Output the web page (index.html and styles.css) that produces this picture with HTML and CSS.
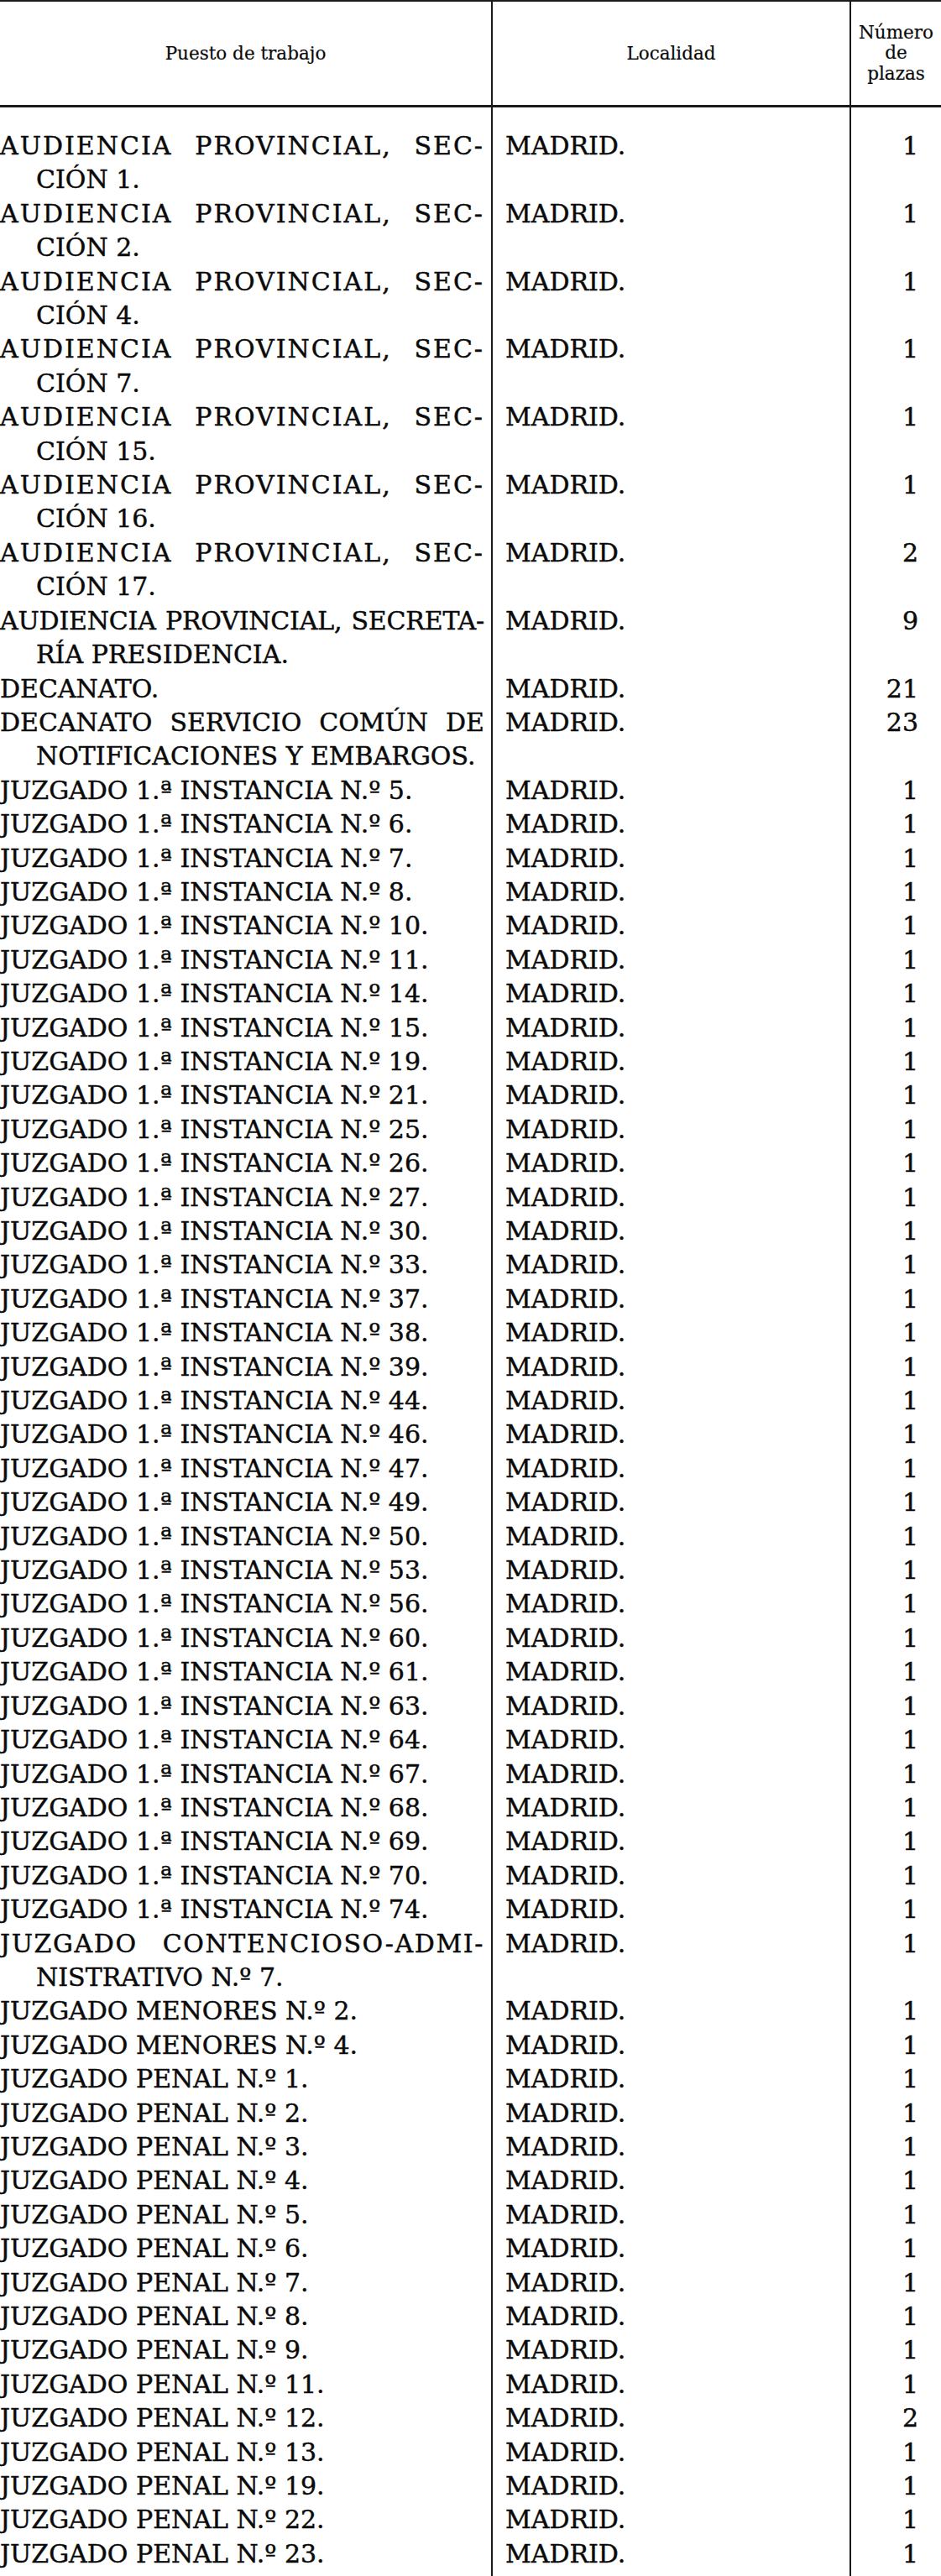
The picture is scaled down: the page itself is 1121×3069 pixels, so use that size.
FILE: index.html
```html
<!DOCTYPE html>
<html lang="es">
<head>
<meta charset="utf-8">
<title>Puestos de trabajo</title>
<link rel="stylesheet" href="styles.css">
</head>
<body>
<table class="plazas">
  <colgroup>
    <col class="c-puesto">
    <col class="c-loc">
    <col class="c-num">
  </colgroup>
  <thead>
    <tr>
      <th class="h-puesto">Puesto de trabajo</th>
      <th class="h-loc">Localidad</th>
      <th class="h-num">Número<br>de<br>plazas</th>
    </tr>
  </thead>
  <tbody>
    <tr><td class="puesto"><span class="l1 sp">AUDIENCIA PROVINCIAL, SEC-</span><span class="l2">CIÓN 1.</span></td><td class="loc">MADRID.</td><td class="num">1</td></tr>
    <tr><td class="puesto"><span class="l1 sp">AUDIENCIA PROVINCIAL, SEC-</span><span class="l2">CIÓN 2.</span></td><td class="loc">MADRID.</td><td class="num">1</td></tr>
    <tr><td class="puesto"><span class="l1 sp">AUDIENCIA PROVINCIAL, SEC-</span><span class="l2">CIÓN 4.</span></td><td class="loc">MADRID.</td><td class="num">1</td></tr>
    <tr><td class="puesto"><span class="l1 sp">AUDIENCIA PROVINCIAL, SEC-</span><span class="l2">CIÓN 7.</span></td><td class="loc">MADRID.</td><td class="num">1</td></tr>
    <tr><td class="puesto"><span class="l1 sp">AUDIENCIA PROVINCIAL, SEC-</span><span class="l2">CIÓN 15.</span></td><td class="loc">MADRID.</td><td class="num">1</td></tr>
    <tr><td class="puesto"><span class="l1 sp">AUDIENCIA PROVINCIAL, SEC-</span><span class="l2">CIÓN 16.</span></td><td class="loc">MADRID.</td><td class="num">1</td></tr>
    <tr><td class="puesto"><span class="l1 sp">AUDIENCIA PROVINCIAL, SEC-</span><span class="l2">CIÓN 17.</span></td><td class="loc">MADRID.</td><td class="num">2</td></tr>
    <tr><td class="puesto"><span class="l1 tight">AUDIENCIA PROVINCIAL, SECRETA-</span><span class="l2">RÍA PRESIDENCIA.</span></td><td class="loc">MADRID.</td><td class="num">9</td></tr>
    <tr><td class="puesto">DECANATO.</td><td class="loc">MADRID.</td><td class="num">21</td></tr>
    <tr><td class="puesto"><span class="l1">DECANATO SERVICIO COMÚN DE</span><span class="l2">NOTIFICACIONES Y EMBARGOS.</span></td><td class="loc">MADRID.</td><td class="num">23</td></tr>
    <tr><td class="puesto">JUZGADO 1.ª INSTANCIA N.º 5.</td><td class="loc">MADRID.</td><td class="num">1</td></tr>
    <tr><td class="puesto">JUZGADO 1.ª INSTANCIA N.º 6.</td><td class="loc">MADRID.</td><td class="num">1</td></tr>
    <tr><td class="puesto">JUZGADO 1.ª INSTANCIA N.º 7.</td><td class="loc">MADRID.</td><td class="num">1</td></tr>
    <tr><td class="puesto">JUZGADO 1.ª INSTANCIA N.º 8.</td><td class="loc">MADRID.</td><td class="num">1</td></tr>
    <tr><td class="puesto">JUZGADO 1.ª INSTANCIA N.º 10.</td><td class="loc">MADRID.</td><td class="num">1</td></tr>
    <tr><td class="puesto">JUZGADO 1.ª INSTANCIA N.º 11.</td><td class="loc">MADRID.</td><td class="num">1</td></tr>
    <tr><td class="puesto">JUZGADO 1.ª INSTANCIA N.º 14.</td><td class="loc">MADRID.</td><td class="num">1</td></tr>
    <tr><td class="puesto">JUZGADO 1.ª INSTANCIA N.º 15.</td><td class="loc">MADRID.</td><td class="num">1</td></tr>
    <tr><td class="puesto">JUZGADO 1.ª INSTANCIA N.º 19.</td><td class="loc">MADRID.</td><td class="num">1</td></tr>
    <tr><td class="puesto">JUZGADO 1.ª INSTANCIA N.º 21.</td><td class="loc">MADRID.</td><td class="num">1</td></tr>
    <tr><td class="puesto">JUZGADO 1.ª INSTANCIA N.º 25.</td><td class="loc">MADRID.</td><td class="num">1</td></tr>
    <tr><td class="puesto">JUZGADO 1.ª INSTANCIA N.º 26.</td><td class="loc">MADRID.</td><td class="num">1</td></tr>
    <tr><td class="puesto">JUZGADO 1.ª INSTANCIA N.º 27.</td><td class="loc">MADRID.</td><td class="num">1</td></tr>
    <tr><td class="puesto">JUZGADO 1.ª INSTANCIA N.º 30.</td><td class="loc">MADRID.</td><td class="num">1</td></tr>
    <tr><td class="puesto">JUZGADO 1.ª INSTANCIA N.º 33.</td><td class="loc">MADRID.</td><td class="num">1</td></tr>
    <tr><td class="puesto">JUZGADO 1.ª INSTANCIA N.º 37.</td><td class="loc">MADRID.</td><td class="num">1</td></tr>
    <tr><td class="puesto">JUZGADO 1.ª INSTANCIA N.º 38.</td><td class="loc">MADRID.</td><td class="num">1</td></tr>
    <tr><td class="puesto">JUZGADO 1.ª INSTANCIA N.º 39.</td><td class="loc">MADRID.</td><td class="num">1</td></tr>
    <tr><td class="puesto">JUZGADO 1.ª INSTANCIA N.º 44.</td><td class="loc">MADRID.</td><td class="num">1</td></tr>
    <tr><td class="puesto">JUZGADO 1.ª INSTANCIA N.º 46.</td><td class="loc">MADRID.</td><td class="num">1</td></tr>
    <tr><td class="puesto">JUZGADO 1.ª INSTANCIA N.º 47.</td><td class="loc">MADRID.</td><td class="num">1</td></tr>
    <tr><td class="puesto">JUZGADO 1.ª INSTANCIA N.º 49.</td><td class="loc">MADRID.</td><td class="num">1</td></tr>
    <tr><td class="puesto">JUZGADO 1.ª INSTANCIA N.º 50.</td><td class="loc">MADRID.</td><td class="num">1</td></tr>
    <tr><td class="puesto">JUZGADO 1.ª INSTANCIA N.º 53.</td><td class="loc">MADRID.</td><td class="num">1</td></tr>
    <tr><td class="puesto">JUZGADO 1.ª INSTANCIA N.º 56.</td><td class="loc">MADRID.</td><td class="num">1</td></tr>
    <tr><td class="puesto">JUZGADO 1.ª INSTANCIA N.º 60.</td><td class="loc">MADRID.</td><td class="num">1</td></tr>
    <tr><td class="puesto">JUZGADO 1.ª INSTANCIA N.º 61.</td><td class="loc">MADRID.</td><td class="num">1</td></tr>
    <tr><td class="puesto">JUZGADO 1.ª INSTANCIA N.º 63.</td><td class="loc">MADRID.</td><td class="num">1</td></tr>
    <tr><td class="puesto">JUZGADO 1.ª INSTANCIA N.º 64.</td><td class="loc">MADRID.</td><td class="num">1</td></tr>
    <tr><td class="puesto">JUZGADO 1.ª INSTANCIA N.º 67.</td><td class="loc">MADRID.</td><td class="num">1</td></tr>
    <tr><td class="puesto">JUZGADO 1.ª INSTANCIA N.º 68.</td><td class="loc">MADRID.</td><td class="num">1</td></tr>
    <tr><td class="puesto">JUZGADO 1.ª INSTANCIA N.º 69.</td><td class="loc">MADRID.</td><td class="num">1</td></tr>
    <tr><td class="puesto">JUZGADO 1.ª INSTANCIA N.º 70.</td><td class="loc">MADRID.</td><td class="num">1</td></tr>
    <tr><td class="puesto">JUZGADO 1.ª INSTANCIA N.º 74.</td><td class="loc">MADRID.</td><td class="num">1</td></tr>
    <tr><td class="puesto"><span class="l1 sp-s">JUZGADO CONTENCIOSO-ADMI-</span><span class="l2">NISTRATIVO N.º 7.</span></td><td class="loc">MADRID.</td><td class="num">1</td></tr>
    <tr><td class="puesto">JUZGADO MENORES N.º 2.</td><td class="loc">MADRID.</td><td class="num">1</td></tr>
    <tr><td class="puesto">JUZGADO MENORES N.º 4.</td><td class="loc">MADRID.</td><td class="num">1</td></tr>
    <tr><td class="puesto">JUZGADO PENAL N.º 1.</td><td class="loc">MADRID.</td><td class="num">1</td></tr>
    <tr><td class="puesto">JUZGADO PENAL N.º 2.</td><td class="loc">MADRID.</td><td class="num">1</td></tr>
    <tr><td class="puesto">JUZGADO PENAL N.º 3.</td><td class="loc">MADRID.</td><td class="num">1</td></tr>
    <tr><td class="puesto">JUZGADO PENAL N.º 4.</td><td class="loc">MADRID.</td><td class="num">1</td></tr>
    <tr><td class="puesto">JUZGADO PENAL N.º 5.</td><td class="loc">MADRID.</td><td class="num">1</td></tr>
    <tr><td class="puesto">JUZGADO PENAL N.º 6.</td><td class="loc">MADRID.</td><td class="num">1</td></tr>
    <tr><td class="puesto">JUZGADO PENAL N.º 7.</td><td class="loc">MADRID.</td><td class="num">1</td></tr>
    <tr><td class="puesto">JUZGADO PENAL N.º 8.</td><td class="loc">MADRID.</td><td class="num">1</td></tr>
    <tr><td class="puesto">JUZGADO PENAL N.º 9.</td><td class="loc">MADRID.</td><td class="num">1</td></tr>
    <tr><td class="puesto">JUZGADO PENAL N.º 11.</td><td class="loc">MADRID.</td><td class="num">1</td></tr>
    <tr><td class="puesto">JUZGADO PENAL N.º 12.</td><td class="loc">MADRID.</td><td class="num">2</td></tr>
    <tr><td class="puesto">JUZGADO PENAL N.º 13.</td><td class="loc">MADRID.</td><td class="num">1</td></tr>
    <tr><td class="puesto">JUZGADO PENAL N.º 19.</td><td class="loc">MADRID.</td><td class="num">1</td></tr>
    <tr><td class="puesto">JUZGADO PENAL N.º 22.</td><td class="loc">MADRID.</td><td class="num">1</td></tr>
    <tr><td class="puesto">JUZGADO PENAL N.º 23.</td><td class="loc">MADRID.</td><td class="num">1</td></tr>
  </tbody>
</table>
</body>
</html>
```

FILE: styles.css
```css
html, body {
  margin: 0;
  padding: 0;
  background: #ffffff;
}

body {
  font-family: "DejaVu Serif", "Liberation Serif", serif;
  color: #0a0a0a;
}

.plazas {
  width: 1121px;
  table-layout: fixed;
  border-collapse: separate;
  border-spacing: 0;
  border-top: 2px solid #1a1a1a;
}

.c-puesto { width: 587px; }
.c-loc { width: 427px; }
.c-num { width: 107px; }

.plazas th {
  font-weight: normal;
  font-size: 21.5px;
  height: 123px;
  padding: 0;
  vertical-align: middle;
  text-align: center;
  border-bottom: 3px solid #1a1a1a;
  -webkit-text-stroke: 0.2px #0a0a0a;
}

.h-puesto,
.h-loc,
.puesto,
.loc {
  border-right: 2px solid #1a1a1a;
}

.h-num {
  line-height: 24.5px;
  padding-top: 2px;
}

.plazas td {
  font-size: 30px;
  line-height: 40.4px;
  vertical-align: top;
  padding: 0;
  white-space: nowrap;
  -webkit-text-stroke: 0.45px #0a0a0a;
}

.plazas tbody tr:first-child td {
  padding-top: 26px;
}

.plazas tbody tr:last-child td {
  padding-bottom: 6px;
}

.puesto {
  padding-right: 8px !important;
  text-align: left;
}

.loc {
  padding-left: 15px !important;
}

.num {
  text-align: right;
  padding-right: 27px !important;
}

.l1 {
  display: block;
  text-align: justify;
  text-align-last: justify;
}

.l1.sp {
  letter-spacing: 2px;
}

.l1.sp-s {
  letter-spacing: 1.6px;
}

.l1.tight {
  letter-spacing: -0.2px;
}

.l2 {
  display: block;
  padding-left: 43px;
}
```
